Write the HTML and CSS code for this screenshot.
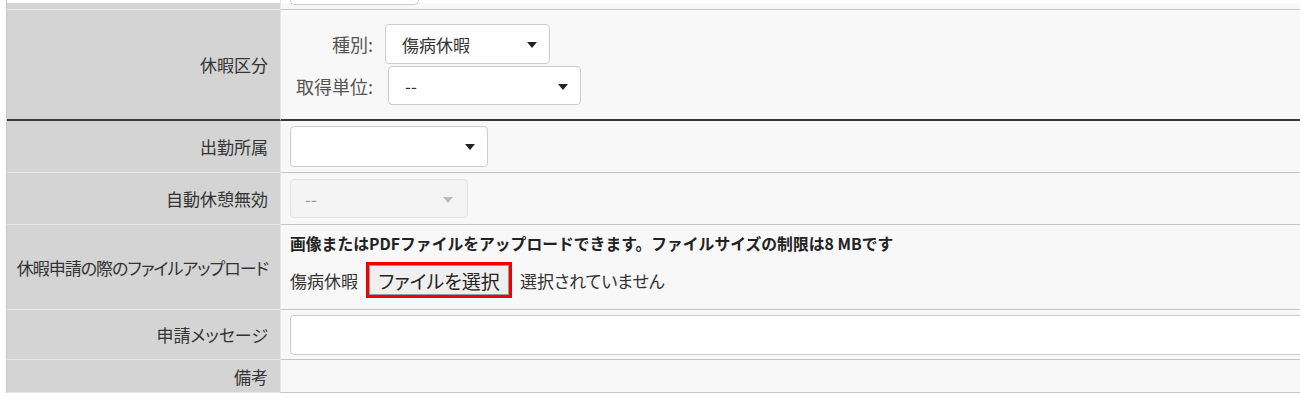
FILE: index.html
```html
<!DOCTYPE html>
<html>
<head>
    <meta charset="utf-8">
    <link rel="stylesheet" href="styles.css">
</head>
<body>
    <div class="form">

        <!-- Previous row, scrolled mostly out of view -->
        <div class="row row-cut">
            <div class="label-cell"></div>
            <div class="value-cell">
                <div class="select-stub"></div>
            </div>
        </div>

        <!-- Leave type -->
        <div class="row row-leave">
            <div class="label-cell">休暇区分</div>
            <div class="value-cell">
                <div class="sub-grid">
                    <span class="sub-label">種別:</span>
                    <div class="select select-kind">傷病休暇<span class="arrow"></span></div>
                    <span class="sub-label">取得単位:</span>
                    <div class="select select-unit">--<span class="arrow"></span></div>
                </div>
            </div>
        </div>

        <div class="row row-mid">
            <div class="label-cell">出勤所属</div>
            <div class="value-cell">
                <div class="select select-dept"><span class="arrow"></span></div>
            </div>
        </div>

        <div class="row row-mid">
            <div class="label-cell">自動休憩無効</div>
            <div class="value-cell">
                <div class="select select-break disabled">--<span class="arrow"></span></div>
            </div>
        </div>

        <!-- File upload -->
        <div class="row row-upload">
            <div class="label-cell label-long">休暇申請の際のファイルアップロード</div>
            <div class="value-cell upload-cell">
                <div class="upload-note">画像またはPDFファイルをアップロードできます。ファイルサイズの制限は8 MBです</div>
                <div class="upload-line">
                    <span>傷病休暇</span>
                    <span class="file-mark"><span class="file-button">ファイルを選択</span></span>
                    <span>選択されていません</span>
                </div>
            </div>
        </div>

        <div class="row row-message">
            <div class="label-cell">申請メッセージ</div>
            <div class="value-cell">
                <div class="textarea"></div>
            </div>
        </div>

        <div class="row row-note">
            <div class="label-cell">備考</div>
            <div class="value-cell"></div>
        </div>

    </div>
</body>
</html>
```

FILE: styles.css
```css
/* Page base */
body {
    margin: 0;
    background-color: #ffffff;
    font-family: "Noto Sans CJK JP", "Noto Sans", sans-serif;
    font-size: 17px;
    font-feature-settings: "palt";
    color: #333333;
    overflow: hidden;
}
.form {
    margin-left: 6px;
    width: 1330px;
    border-left: 1px solid #c8c8c8;
}

/* Rows: label column + value column */
.row {
    display: grid;
    grid-template-columns: 273px 1fr;
}
.label-cell, .value-cell {
    box-sizing: border-box;
    display: flex;
    align-items: center;
}
.label-cell {
    justify-content: flex-end;
    padding-right: 12px;
    background-color: #d4d4d4;
    border-bottom: 1px solid #e8e8e8;
    color: #333333;
    white-space: nowrap;
}
.label-cell.label-long {
    letter-spacing: -1px;
}
.value-cell {
    padding-left: 9px;
    background-color: #f8f8f8;
    border-left: 1px solid #e6e6e6;
    border-bottom: 1px solid #c4c4c4;
}

.row-cut { height: 10px; }
.row-cut .label-cell {
    background: linear-gradient(#ffffff 3px, #d4d4d4 3px);
}
.row-cut .value-cell {
    align-items: flex-start;
    background: linear-gradient(#ffffff 3px, #f8f8f8 3px);
}
.select-stub {
    width: 127px;
    height: 4px;
    background-color: #ffffff;
    border: 1px solid #cccccc;
    border-top: none;
    border-radius: 0 0 5px 5px;
}

.row-leave { height: 111px; }
.row-leave .label-cell, .row-leave .value-cell {
    border-bottom: 2px solid #3a3a3a;
}
.row-mid { height: 52px; }
.row-upload { height: 85px; }
.row-message { height: 50px; }
.row-note { height: 33px; }

/* Leave type sub form */
.sub-grid {
    display: grid;
    grid-template-columns: 83px auto;
    row-gap: 2px;
    align-items: center;
}
.sub-label {
    text-align: right;
    font-size: 18px;
    color: #555555;
}

/* Fake select boxes */
.select {
    position: relative;
    box-sizing: border-box;
    height: 40px;
    display: flex;
    align-items: center;
    padding-left: 16px;
    background-color: #ffffff;
    border: 1px solid #cccccc;
    border-radius: 4px;
    color: #333333;
}
.arrow {
    position: absolute;
    right: 12px;
    top: 17px;
    border-left: 5px solid transparent;
    border-right: 5px solid transparent;
    border-top: 6px solid #222222;
}
.select-kind { width: 165px; margin-left: 12px; }
.select-unit { width: 193px; margin-left: 15px; height: 39px; }
.select-dept { width: 198px; height: 41px; }
.select-break { width: 178px; height: 39px; padding-left: 14px; }
.select.disabled {
    background-color: #f4f4f4;
    border-color: #e2e2e2;
    color: #999999;
}
.select.disabled .arrow {
    border-top-color: #bbbbbb;
    right: 14px;
}

/* Upload cell */
.upload-cell {
    flex-direction: column;
    align-items: flex-start;
    padding-top: 9px;
}
.upload-note {
    font-weight: bold;
    font-size: 15.8px;
    font-feature-settings: normal;
    line-height: 20px;
    color: #222222;
}
.upload-line {
    display: flex;
    align-items: center;
    gap: 8px;
    margin-top: 8px;
    height: 36px;
}
.file-mark {
    box-sizing: border-box;
    width: 146px;
    height: 36px;
    border: 3px solid #f00000;
    display: flex;
}
.file-button {
    box-sizing: border-box;
    flex: 1;
    display: flex;
    align-items: center;
    justify-content: center;
    font-size: 19px;
    background-color: #efefef;
    border: 1px solid #9a9a9a;
    color: #222222;
}

/* Message */
.textarea {
    box-sizing: border-box;
    width: 1100px;
    height: 40px;
    background-color: #ffffff;
    border: 1px solid #cccccc;
    border-radius: 4px;
}
```
